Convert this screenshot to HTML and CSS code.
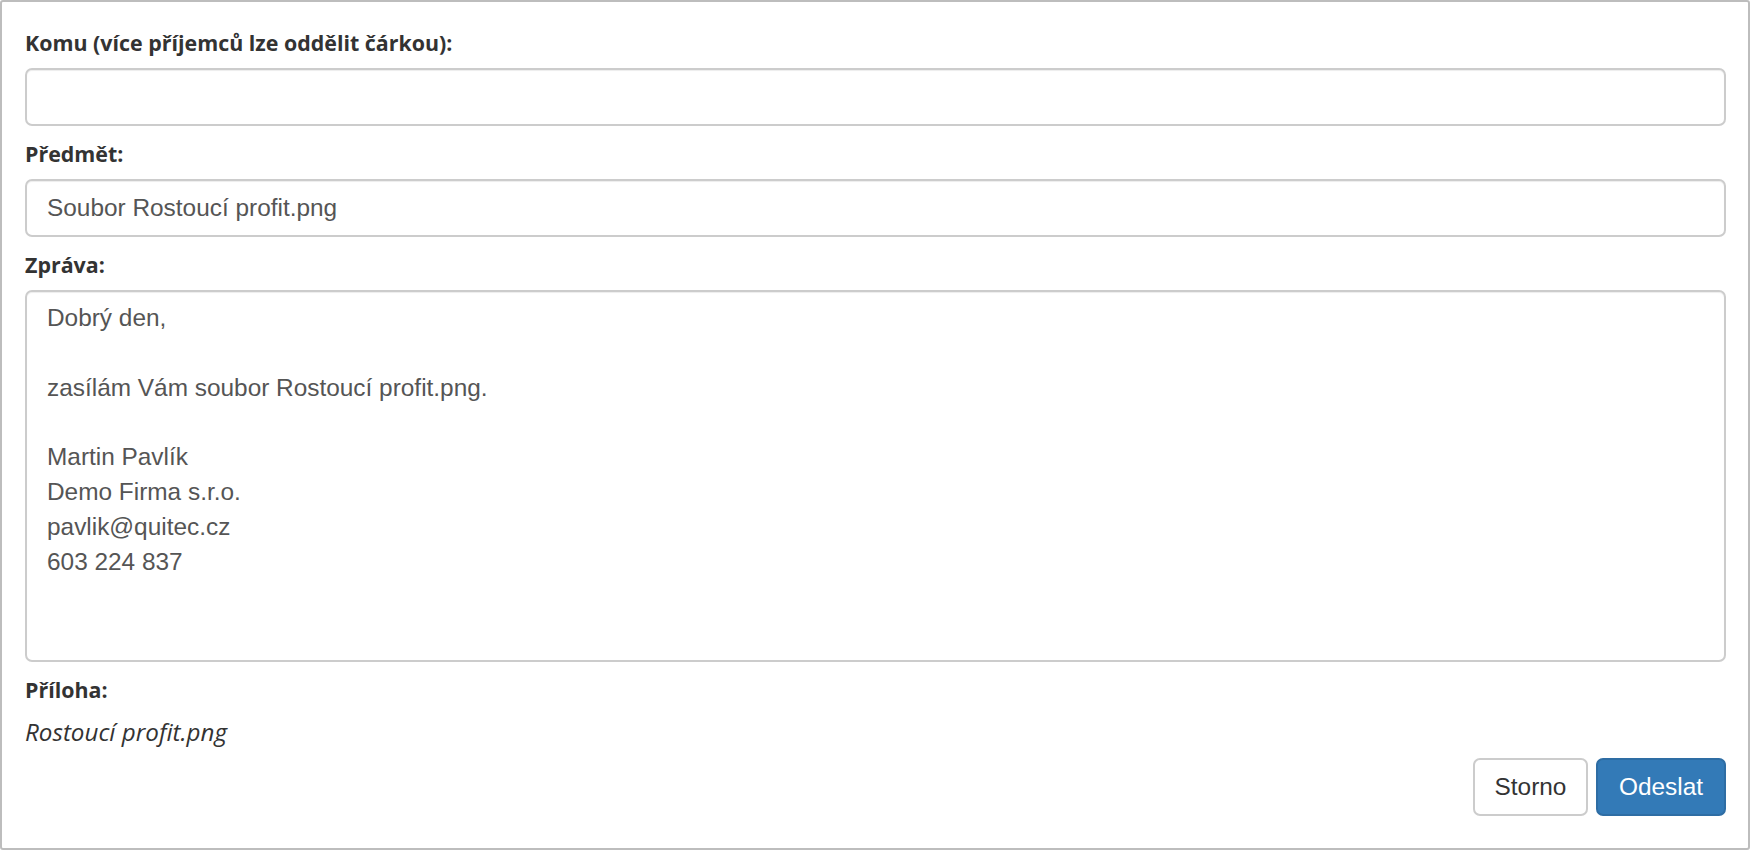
FILE: index.html
```html
<!DOCTYPE html>
<html lang="cs">
<head>
<meta charset="utf-8">
<title>Odeslat e-mailem</title>
<link rel="stylesheet" href="styles.css">
</head>
<body>
<div class="dialog">
  <form class="mail-form">
    <div class="field">
      <label class="field-label" for="to">Komu (více příjemců lze oddělit čárkou):</label>
      <input class="control" id="to" type="text" value="">
    </div>
    <div class="field">
      <label class="field-label" for="subject">Předmět:</label>
      <input class="control" id="subject" type="text" value="Soubor Rostoucí profit.png">
    </div>
    <div class="field">
      <label class="field-label" for="message">Zpráva:</label>
      <textarea class="control message" id="message">Dobrý den,

zasílám Vám soubor Rostoucí profit.png.

Martin Pavlík
Demo Firma s.r.o.
pavlik@quitec.cz
603 224 837</textarea>
    </div>
    <div class="field">
      <span class="field-label">Příloha:</span>
      <p class="attachment">Rostoucí profit.png</p>
    </div>
    <div class="actions">
      <button type="button" class="btn btn-default">Storno</button>
      <button type="button" class="btn btn-primary">Odeslat</button>
    </div>
  </form>
</div>
</body>
</html>
```

FILE: styles.css
```css
html, body {
  margin: 0;
  padding: 0;
  background: #ffffff;
}

.dialog {
  box-sizing: border-box;
  width: 1750px;
  height: 850px;
  border: 2px solid #bdbdbd;
  border-radius: 3px;
  padding: 26px 22px 31px 23px;
  background: #ffffff;
}

.mail-form {
  display: flex;
  flex-direction: column;
}

.field + .field {
  margin-top: 13px;
}

.field-label {
  display: block;
  font-family: "Open Sans", sans-serif;
  font-weight: 700;
  font-size: 21.4px;
  line-height: 30px;
  color: #333333;
  margin-bottom: 10px;
}

.control {
  display: block;
  box-sizing: border-box;
  width: 100%;
  height: 58px;
  margin: 0;
  padding: 0 20px;
  border: 2px solid #cccccc;
  border-radius: 7px;
  box-shadow: inset 0 1px 1px rgba(0, 0, 0, 0.075);
  background: #ffffff;
  font-family: "Liberation Sans", Arial, sans-serif;
  font-size: 24.4px;
  color: #555555;
  outline: none;
}

.message {
  height: 372px;
  padding: 9px 20px;
  line-height: 34.85px;
  resize: none;
  overflow: hidden;
}

.attachment {
  margin: 1px 0 0 0;
  font-family: "Open Sans", sans-serif;
  font-style: italic;
  font-size: 24.2px;
  line-height: 34.8px;
  color: #333333;
}

.actions {
  display: flex;
  justify-content: flex-end;
  gap: 8px;
  margin-top: 8px;
}

.btn {
  box-sizing: border-box;
  height: 58px;
  padding: 0 18px;
  border: 2px solid #cccccc;
  border-radius: 7px;
  font-family: "Liberation Sans", Arial, sans-serif;
  font-size: 24.4px;
  cursor: pointer;
}

.btn-default {
  width: 115px;
  background: #ffffff;
  color: #333333;
}

.btn-primary {
  width: 130px;
  background: #337ab7;
  border-color: #2e6da4;
  color: #ffffff;
}
```
